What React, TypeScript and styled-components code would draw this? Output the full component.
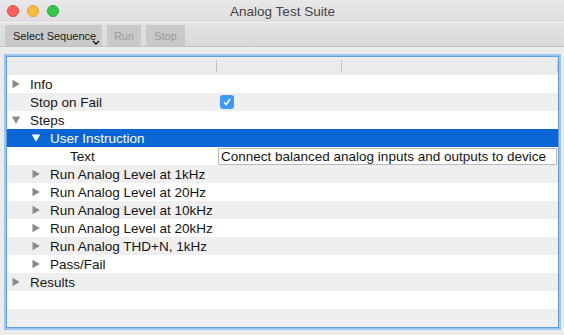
// Dependencies
import React from 'react'
import styled, { createGlobalStyle } from 'styled-components'

// Data
type Node = {
  label: string
  level: number
  open?: boolean
  leaf?: boolean
  selected?: boolean
  checked?: boolean
  value?: string
}

const rows: Node[] = [
  { label: 'Info', level: 0, open: false },
  { label: 'Stop on Fail', level: 0, leaf: true, checked: true },
  { label: 'Steps', level: 0, open: true },
  { label: 'User Instruction', level: 1, open: true, selected: true },
  { label: 'Text', level: 2, leaf: true, value: 'Connect balanced analog inputs and outputs to device' },
  { label: 'Run Analog Level at 1kHz', level: 1 },
  { label: 'Run Analog Level at 20Hz', level: 1 },
  { label: 'Run Analog Level at 10kHz', level: 1 },
  { label: 'Run Analog Level at 20kHz', level: 1 },
  { label: 'Run Analog THD+N, 1kHz', level: 1 },
  { label: 'Pass/Fail', level: 1 },
  { label: 'Results', level: 0 },
]

const FILLER_ROWS = 2

// Page
export default function App() {
  return (
    <>
      <Global />
      <Window>
        <TitleBar>
          <Lights>
            <Light color="#fc605c" edge="#de4a45" />
            <Light color="#fdbc40" edge="#dea235" />
            <Light color="#34c84a" edge="#27aa35" />
          </Lights>
          <Title>Analog Test Suite</Title>
        </TitleBar>
        <Toolbar>
          <ToolButton width={97} left>
            Select Sequence
            <Chevron viewBox="0 0 8 5">
              <path d="M1 1 L4 4 L7 1" fill="none" stroke="#111" strokeWidth="1.3" />
            </Chevron>
          </ToolButton>
          <ToolButton width={34} disabled>Run</ToolButton>
          <ToolButton width={39} disabled>Stop</ToolButton>
        </Toolbar>
        <Content>
          <Outline>
            <HeaderRow>
              <HeaderCell width={210} />
              <HeaderCell width={125} />
              <HeaderCell flex />
            </HeaderRow>
            {rows.map((row, i) => (
              <Row key={row.label} odd={i % 2 === 1} selected={row.selected}>
                <NameCell level={row.level}>
                  <Disclosure>
                    {!row.leaf && (
                      <Triangle viewBox="0 0 10 10" open={row.open}>
                        <path d="M1.5 0.8 L8.8 5 L1.5 9.2 Z" fill={row.selected ? '#fff' : '#8a8a8a'} />
                      </Triangle>
                    )}
                  </Disclosure>
                  {row.label}
                </NameCell>
                <ValueCell>
                  {row.checked && (
                    <Checkbox>
                      <svg width="10" height="10" viewBox="0 0 10 10">
                        <path d="M2 5.2 L4.2 7.5 L8.2 2" fill="none" stroke="#fff" strokeWidth="1.5" />
                      </svg>
                    </Checkbox>
                  )}
                  {row.value && <Editor>{row.value}</Editor>}
                </ValueCell>
              </Row>
            ))}
            {Array.from({ length: FILLER_ROWS }).map((_, i) => (
              <Row key={'f' + i} odd={(rows.length + i) % 2 === 1} />
            ))}
          </Outline>
        </Content>
      </Window>
    </>
  )
}

// Styled Components
const Global = createGlobalStyle`
  html, body {
    margin: 0;
    padding: 0;
    background: #ececec;
  }
  body {
    font-family: "Liberation Sans", Arial, sans-serif;
    -webkit-font-smoothing: antialiased;
  }
`

const Window = styled.div`
  width: 564px;
  height: 335px;
  display: flex;
  flex-direction: column;
  background: #ececec;
  overflow: hidden;
`

const TitleBar = styled.div`
  position: relative;
  height: 22px;
  display: flex;
  align-items: center;
  justify-content: center;
  background: linear-gradient(#e9e7e9, #dfdddf);
`

const Lights = styled.div`
  position: absolute;
  left: 7px;
  top: 5px;
  display: flex;
  gap: 8px;
`

const Light = styled.span<{ color: string; edge: string }>`
  width: 12px;
  height: 12px;
  border-radius: 50%;
  box-sizing: border-box;
  background: ${p => p.color};
  border: 0.5px solid ${p => p.edge};
`

const Title = styled.div`
  font-size: 13.5px;
  color: #454545;
  margin-left: 1px;
`

const Toolbar = styled.div`
  height: 25px;
  box-sizing: border-box;
  display: flex;
  gap: 5px;
  padding: 2px 0 0 5px;
  border-top: 1px solid #f2f2f2;
  border-bottom: 1px solid #c2c2c2;
  background: linear-gradient(#e2e2e2, #dadada);
`

const ToolButton = styled.button<{ width: number; left?: boolean }>`
  position: relative;
  width: ${p => p.width}px;
  height: 21px;
  box-sizing: border-box;
  padding: ${p => (p.left ? '0 0 0 8px' : '0')};
  margin: 0;
  border: none;
  border-radius: 1px;
  background: #c9c9c9;
  font-family: inherit;
  font-size: 11px;
  color: ${p => (p.disabled ? '#9b9b9b' : '#1a1a1a')};
  text-align: ${p => (p.left ? 'left' : 'center')};
`

const Chevron = styled.svg`
  position: absolute;
  right: 2px;
  bottom: 1px;
  width: 8px;
  height: 5px;
`

const Content = styled.div`
  flex: 1;
  padding: 9px 6px 0 6px;
`

const Outline = styled.div`
  width: 553px;
  box-sizing: border-box;
  border: 1px solid #5f9fe8;
  box-shadow: 0 0 0 2px #9dc6f3;
  background: #fff;
`

const HeaderRow = styled.div`
  display: flex;
  height: 18px;
  background: #ebebeb;
`

const HeaderCell = styled.div<{ width?: number; flex?: boolean }>`
  ${p => (p.flex ? 'flex: 1;' : `width: ${p.width}px;`)}
  position: relative;

  &::after {
    content: '';
    position: absolute;
    right: 0;
    top: 3px;
    bottom: 3px;
    width: 1px;
    background: #c4c4c4;
  }
`

const Row = styled.div<{ odd?: boolean; selected?: boolean }>`
  display: flex;
  height: 18px;
  align-items: center;
  font-size: 13.5px;
  background: ${p => (p.selected ? '#0b67d6' : p.odd ? '#efefef' : '#fff')};
  color: ${p => (p.selected ? '#fff' : '#141414')};
`

const NameCell = styled.div<{ level: number }>`
  width: 210px;
  display: flex;
  align-items: center;
  padding-left: ${p => 4 + p.level * 20}px;
  box-sizing: border-box;
  white-space: nowrap;
`

const Disclosure = styled.span`
  width: 19px;
  height: 18px;
  display: flex;
  align-items: center;
`

const Triangle = styled.svg<{ open?: boolean }>`
  width: 10px;
  height: 10px;
  transform: ${p => (p.open ? 'rotate(90deg)' : 'none')};
`

const ValueCell = styled.div`
  flex: 1;
  display: flex;
  align-items: center;
  height: 18px;
`

const Checkbox = styled.span`
  width: 14px;
  height: 14px;
  margin-left: 3px;
  border-radius: 3px;
  background: #3d98fb;
  display: flex;
  align-items: center;
  justify-content: center;
`

const Editor = styled.div`
  flex: 1;
  margin-right: 1px;
  margin-left: 1px;
  height: 17px;
  box-sizing: border-box;
  border: 1px solid #b9b9b9;
  padding-left: 2px;
  line-height: 15px;
  background: #fff;
  white-space: nowrap;
`
